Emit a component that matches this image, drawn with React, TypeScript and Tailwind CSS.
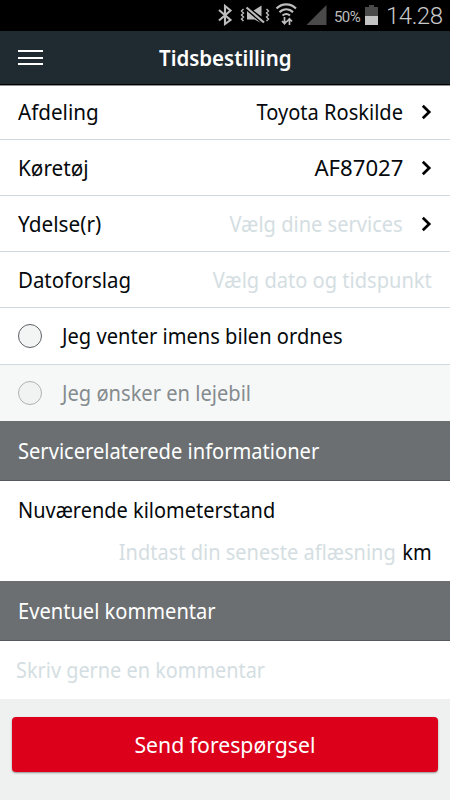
import clsx from 'clsx'
import type { ReactNode } from 'react'

type TextProps = { children: ReactNode; className?: string }

function Text({ children, className = 'origin-left scale-x-[.935]' }: TextProps) {
  return <span className={clsx('inline-block whitespace-nowrap', className)}>{children}</span>
}

function Chevron() {
  return (
    <svg className="h-[16px] w-[11px] shrink-0" viewBox="0 0 11 16" fill="none" stroke="#000" strokeWidth="2.7">
      <path d="M1.8 1.8 8.2 8 1.8 14.2" />
    </svg>
  )
}

type RowProps = {
  label: string
  value: string
  placeholder?: boolean
  arrow?: boolean
  className?: string
  labelClass?: string
  valueClass?: string
}

function Row({
  label,
  value,
  placeholder,
  arrow,
  className = 'h-14',
  labelClass = 'origin-left scale-x-[.95]',
  valueClass = 'scale-x-[.933]',
}: RowProps) {
  return (
    <div className={clsx('flex items-center border-b border-[#cfdae0] bg-white pr-[18px] pl-[17.5px]', className)}>
      <Text className={labelClass}>{label}</Text>
      <Text className={clsx('ml-auto origin-right', valueClass, placeholder && 'text-[#d4dee2]')}>{value}</Text>
      {arrow && (
        <span className="ml-[18px] flex">
          <Chevron />
        </span>
      )}
    </div>
  )
}

function RadioRow({ label, disabled }: { label: string; disabled?: boolean }) {
  return (
    <div
      className={clsx(
        'flex items-center pl-[18px]',
        disabled ? 'h-14 bg-[#f6f8f8] text-[#858b8e]' : 'h-[57px] border-b border-[#cfdae0] bg-white',
      )}
    >
      <span
        className={clsx(
          'size-6 rounded-full border',
          disabled ? 'border-[#aeb2b4] bg-[#f1f2f2]' : 'border-[#5c6165] bg-[#f3f5f5]',
        )}
      />
      <span className="ml-5">
        <Text>{label}</Text>
      </span>
    </div>
  )
}

function SectionTitle({ children }: TextProps) {
  return (
    <h2 className="flex h-[60px] items-center border-b border-[#55595d] bg-[#6b6f72] pt-px pl-[17.5px] text-white">
      <Text>{children}</Text>
    </h2>
  )
}

function StatusBar() {
  return (
    <div className="flex h-[31px] items-center bg-black font-['Roboto',sans-serif] text-[#bdbdbd]">
      <svg className="ml-[217px] h-[31px] w-[112px] shrink-0" viewBox="217 0 112 31" fill="none" stroke="#bdbdbd">
        <path d="m219 10 11.500 10-5.500 4V6l5.500 4.500-11.500 10" strokeWidth="2.1" />
        {/* muted speaker with vibration marks */}
        <path d="M243.500 9l-2 2 2 2-2 2 2 2-2 2 2 2M266.500 9l2 2-2 2 2 2-2 2 2 2-2 2" strokeWidth="1.400" />
        <path d="M247 11v8.500h7.500l6.500 3.500zM253.500 10.500l8-5v11z" fill="#bdbdbd" stroke="none" />
        <path d="m246.500 7.500 17.500 15" stroke="#000" strokeWidth="4" />
        <path d="m246.500 7.500 17.500 15" strokeWidth="2.200" />
        {/* wifi with transfer arrows */}
        <path d="M276.500 8.500c5.500-5.500 14-5.500 19.500 0M279.500 12.200c4-4 9.500-4 13.500 0M282.500 15.500c2.500-2 5-2 7.500 0" strokeWidth="2.100" />
        <path d="M284.500 17v6.500m-2.500-2.500 2.500 2.700 2.500-2.700M289.500 25v-6m-2.500 2.500 2.500-2.700 2.500 2.700" strokeWidth="1.700" />
        <path d="M306.500 25h20V5z" fill="#4a4a4a" stroke="none" />
      </svg>
      <span className="ml-[5px] w-[28px] pt-[2px] text-[15px] tracking-[-0.6px]">50%</span>
      <svg className="ml-[3px] h-[31px] w-[13px] shrink-0" viewBox="365 0 13 31">
        <path d="M369 5h5v2h4v9h-13V7h4z" fill="#4a4a4a" />
        <path d="M365 16h13v9h-13z" fill="#c4c4c4" />
      </svg>
      <span className="ml-[8px] pt-[1px] text-[24px] font-light tracking-[-0.5px] text-[#c8c8c8]">14.28</span>
    </div>
  )
}

export default function App() {
  return (
    <div className="flex h-[800px] w-[450px] flex-col overflow-hidden bg-[#eff1f1] font-['Noto_Sans',sans-serif] text-[21.5px] leading-[28px] text-[#05090c]">
      <StatusBar />
      <header className="grid h-[54px] grid-cols-[48px_1fr_48px] items-center border-b border-black bg-[#1f2a31] text-white">
        <button className="flex flex-col gap-[4.5px] pl-[18px]" aria-label="Menu">
          <span className="h-[2px] w-[25px] bg-white" />
          <span className="h-[2px] w-[25px] bg-white" />
          <span className="h-[2px] w-[25px] bg-white" />
        </button>
        <h1 className="pb-px text-center text-[22px] font-semibold">
          <Text className="scale-x-[.93]">Tidsbestilling</Text>
        </h1>
      </header>

      <main className="flex flex-col border-t border-[#8f9395]">
        <Row
          label="Afdeling"
          value="Toyota Roskilde"
          arrow
          className="h-[54px] pb-[2px]"
          labelClass="origin-left scale-x-[.96]"
        />
        <Row label="Køretøj" value="AF87027" arrow labelClass="origin-left scale-x-[.965]" valueClass="scale-x-[1.03]" />
        <Row label="Ydelse(r)" value="Vælg dine services" placeholder arrow labelClass="origin-left scale-x-[.965]" />
        <Row label="Datoforslag" value="Vælg dato og tidspunkt" placeholder />
        <RadioRow label="Jeg venter imens bilen ordnes" />
        <RadioRow label="Jeg ønsker en lejebil" disabled />

        <SectionTitle>Servicerelaterede informationer</SectionTitle>
        <div className="flex h-[100px] flex-col gap-[14px] bg-white pt-[15px] pr-[18px] pl-[17.5px]">
          <Text className="origin-left scale-x-[.928]">Nuværende kilometerstand</Text>
          <div className="flex justify-end">
            <Text className="origin-right scale-x-[.93] text-[#d4dee2]">Indtast din seneste aflæsning</Text>
            <Text className="ml-[5px] origin-right scale-x-[.93]">km</Text>
          </div>
        </div>

        <SectionTitle>Eventuel kommentar</SectionTitle>
        <div className="flex h-[58px] items-center bg-white pl-4 text-[#d4dee2]">
          <Text className="origin-left scale-x-[.925]">Skriv gerne en kommentar</Text>
        </div>
      </main>

      <button className="mx-3 mt-[18px] h-[55px] rounded-[4px] bg-[#dc001b] text-[22.5px] text-white shadow-[0_1px_2px_rgba(0,0,0,0.4)]">
        <Text className="scale-x-[.943]">Send forespørgsel</Text>
      </button>
    </div>
  )
}
